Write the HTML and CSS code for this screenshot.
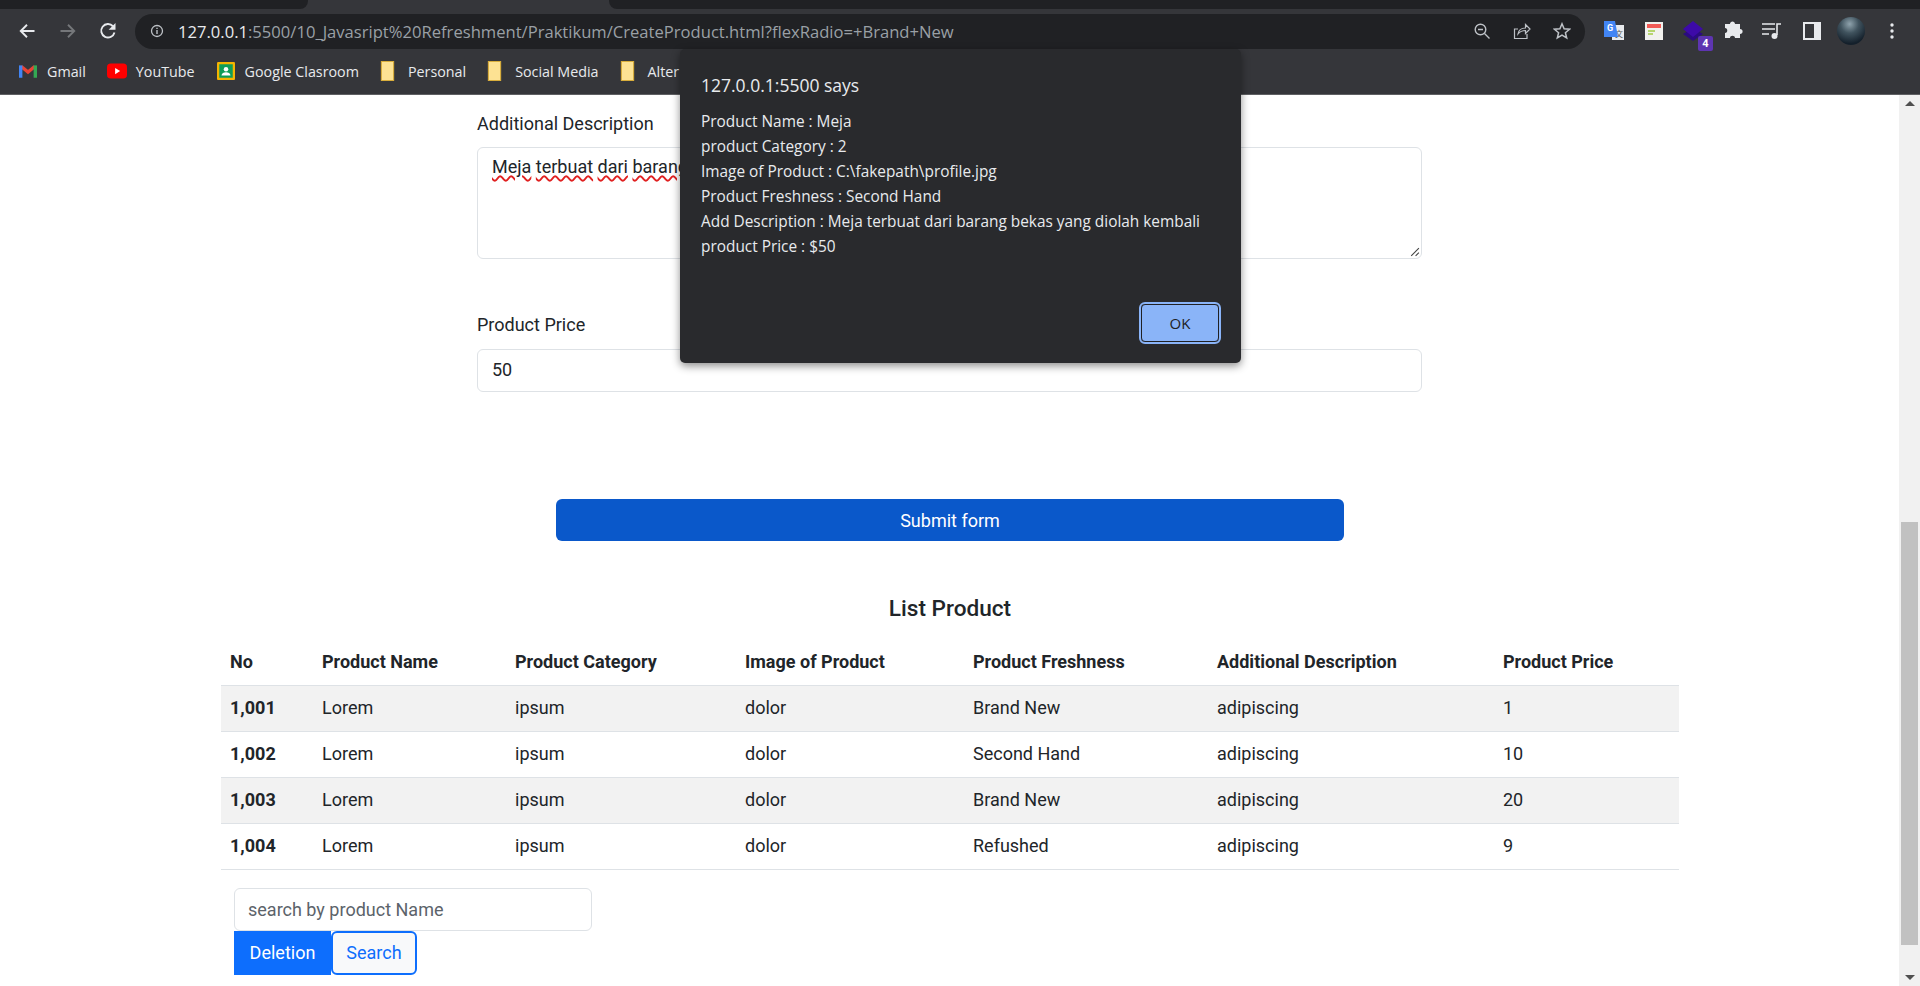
FILE: index.html
```html
<!DOCTYPE html>
<html lang="en">
<head>
  <meta charset="UTF-8">
  <title>Create Product</title>
  <link rel="stylesheet" href="styles.css">
</head>
<body>
  <div class="browser-top">
    <div class="tab-strip">
      <div class="tab-piece tab-left"></div>
      <div class="tab-piece tab-right"></div>
    </div>
    <div class="toolbar">
      <div class="nav-icons">
        <svg class="nav-icon" viewBox="0 0 16 16"><path d="M14 8H3M8 3 3 8l5 5" fill="none" stroke="#e8eaed" stroke-width="1.5"/></svg>
        <svg class="nav-icon" viewBox="0 0 16 16"><path d="M2 8h11M8 3l5 5-5 5" fill="none" stroke="#75777a" stroke-width="1.5"/></svg>
        <svg class="nav-icon" viewBox="0 0 16 16"><path d="M13.2 9.200A5.400 5.400 0 1 1 12 4.200" fill="none" stroke="#e8eaed" stroke-width="1.5"/><path d="M14 1.500V7H8.500z" fill="#e8eaed"/></svg>
      </div>
      <div class="omnibox">
        <svg class="info-icon" viewBox="0 0 14 14"><circle cx="7" cy="7" r="5.500" fill="none" stroke="#bdc1c6" stroke-width="1.300"/><path d="M7 6v4M7 3.800v1.300" stroke="#bdc1c6" stroke-width="1.400"/></svg>
        <div class="url"><span class="url-host">127.0.0.1</span>:5500/10_Javasript%20Refreshment/Praktikum/CreateProduct.html?flexRadio=+Brand+New</div>
        <div class="omni-actions">
          <svg class="omni-icon" viewBox="0 0 18 18"><circle cx="7.500" cy="7.500" r="5.300" fill="none" stroke="#bdc1c6" stroke-width="1.400"/><path d="M5 7.500h5M11.500 11.500l5 5" stroke="#bdc1c6" stroke-width="1.400"/></svg>
          <svg class="omni-icon" viewBox="0 0 18 18"><path d="M5 7H1.500v9.500H14V12" fill="none" stroke="#bdc1c6" stroke-width="1.200"/><path d="M5 12c.6-4 3.500-6 7.500-6V2.500L17 7l-4.500 4.500V8.500C9 8.500 7 9.500 5 12z" fill="none" stroke="#bdc1c6" stroke-width="1.200"/></svg>
          <svg class="omni-icon" viewBox="0 0 18 18"><path d="M9 1.800 11.100 6.800 16.500 7.200 12.400 10.700 13.700 16 9 13.200 4.300 16 5.600 10.700 1.500 7.200 6.900 6.800z" fill="none" stroke="#bdc1c6" stroke-width="1.500"/></svg>
        </div>
      </div>
      <div class="ext-icons">
        <svg class="ext-icon" viewBox="0 0 22 22"><rect x="9" y="5" width="12" height="15" fill="#e8eaed"/><text x="12" y="17" class="ext-glyph-dark">文</text><path d="M1 1h11l3 16H1z" fill="#4285f4"/><text x="4" y="11" class="ext-glyph">G</text></svg>
        <svg class="ext-icon" viewBox="0 0 22 22"><rect x="2" y="2" width="18" height="18" fill="#f1f1ee"/><rect x="4" y="4" width="14" height="4" fill="#f25a55"/><rect x="5" y="10" width="7" height="2" fill="#b6d56f"/><rect x="5" y="13" width="5" height="2" fill="#b6d56f"/></svg>
        <div class="ext-badged">
          <svg class="ext-icon" viewBox="0 0 22 22"><path d="M1 14 11 8l10 6-10 7z" fill="#2b0b80"/><path d="M1 9 11 1l10 8-10 8z" fill="#3d0aa8"/></svg>
          <span class="ext-badge">4</span>
        </div>
        <svg class="ext-icon" viewBox="0 0 22 22"><path d="M8 4c0-3.500 5-3.500 5 0h5v5c3.500 0 3.500 5 0 5v4h-5c0-3-5-3-5 0H3v-5c3 0 3-5 0-5V4z" fill="#e8eaed"/></svg>
        <svg class="ext-icon" viewBox="0 0 22 22"><path d="M1 4h13M1 9h13M1 14h7" stroke="#e8eaed" stroke-width="1.600"/><path d="M16 15V4h4" fill="none" stroke="#e8eaed" stroke-width="1.600"/><circle cx="13.500" cy="16" r="3" fill="#e8eaed"/></svg>
        <svg class="ext-icon" viewBox="0 0 22 22"><path fill-rule="evenodd" d="M2 2h18v18H2zM4 4v14h9V4z" fill="#e8eaed"/></svg>
        <div class="avatar"></div>
        <svg class="menu-dots" viewBox="0 0 4 18"><circle cx="2" cy="3" r="1.700" fill="#e8eaed"/><circle cx="2" cy="9" r="1.700" fill="#e8eaed"/><circle cx="2" cy="15" r="1.700" fill="#e8eaed"/></svg>
      </div>
    </div>
    <div class="bookmarks">
      <div class="bookmark">
        <svg class="bm-icon bm-gmail" viewBox="0 0 16 14"><path d="M2 3l6 5 6-5" fill="none" stroke="#ea4335" stroke-width="3"/><rect x="0" y="2" width="3" height="11" fill="#4285f4"/><rect x="13" y="2" width="3" height="11" fill="#34a853"/></svg>
        Gmail
      </div>
      <div class="bookmark">
        <svg class="bm-icon" viewBox="0 0 16 14"><rect x="0" y="1" width="16" height="12" rx="3" fill="#f00"/><path d="M6.500 4.500v5L10.500 7z" fill="#fff"/></svg>
        YouTube
      </div>
      <div class="bookmark">
        <svg class="bm-icon" viewBox="0 0 16 16"><rect x="0" y="0" width="16" height="16" rx="1" fill="#f4b400"/><rect x="2" y="2" width="12" height="12" fill="#0f9d58"/><circle cx="8" cy="6.500" r="2" fill="#fff"/><path d="M4 12c0-4 8-4 8 0z" fill="#fff"/></svg>
        Google Clasroom
      </div>
      <div class="bookmark">
        <svg class="bm-folder" viewBox="0 0 12 18"><path d="M.5.500h11v17H.5z" fill="#fde293" stroke="#d9ae3c"/></svg>
        Personal
      </div>
      <div class="bookmark">
        <svg class="bm-folder" viewBox="0 0 12 18"><path d="M.5.500h11v17H.5z" fill="#fde293" stroke="#d9ae3c"/></svg>
        Social Media
      </div>
      <div class="bookmark">
        <svg class="bm-folder" viewBox="0 0 12 18"><path d="M.5.500h11v17H.5z" fill="#fde293" stroke="#d9ae3c"/></svg>
        Alter
      </div>
    </div>
  </div>

  <div class="viewport">
    <main class="page">
      <section class="form-area">
        <label class="field-label">Additional Description</label>
        <div class="fake-textarea">
          <span class="misspelled">Meja</span> <span class="misspelled">terbuat</span> <span class="misspelled">dari</span> <span class="misspelled">barang</span>
          <svg class="resize-grip" viewBox="0 0 10 10"><path d="M9 2 2 9M9 6 6 9" stroke="#444" stroke-width="1"/></svg>
        </div>
        <label class="field-label price-label">Product Price</label>
        <div class="fake-input">50</div>
      </section>

      <button class="submit-btn">Submit form</button>

      <h4 class="list-title">List Product</h4>

      <table class="product-table">
        <colgroup>
          <col class="col-no"><col class="col-name"><col class="col-cat"><col class="col-img"><col class="col-fresh"><col class="col-desc"><col class="col-price">
        </colgroup>
        <thead>
          <tr><th>No</th><th>Product Name</th><th>Product Category</th><th>Image of Product</th><th>Product Freshness</th><th>Additional Description</th><th>Product Price</th></tr>
        </thead>
        <tbody>
          <tr><th>1,001</th><td>Lorem</td><td>ipsum</td><td>dolor</td><td>Brand New</td><td>adipiscing</td><td>1</td></tr>
          <tr><th>1,002</th><td>Lorem</td><td>ipsum</td><td>dolor</td><td>Second Hand</td><td>adipiscing</td><td>10</td></tr>
          <tr><th>1,003</th><td>Lorem</td><td>ipsum</td><td>dolor</td><td>Brand New</td><td>adipiscing</td><td>20</td></tr>
          <tr><th>1,004</th><td>Lorem</td><td>ipsum</td><td>dolor</td><td>Refushed</td><td>adipiscing</td><td>9</td></tr>
        </tbody>
      </table>

      <div class="search-box">
        <input class="search-input" type="text" placeholder="search by product Name">
        <div class="search-actions">
          <button class="btn-delete">Deletion</button>
          <button class="btn-search">Search</button>
        </div>
      </div>
    </main>

    <div class="scrollbar">
      <div class="scroll-arrow arrow-up"></div>
      <div class="scroll-track"><div class="scroll-thumb"></div></div>
      <div class="scroll-arrow arrow-down"></div>
    </div>
  </div>

  <div class="alert-dialog">
    <div class="alert-title">127.0.0.1:5500 says</div>
    <div class="alert-body">
      <div>Product Name : Meja</div>
      <div>product Category : 2</div>
      <div>Image of Product : C:\fakepath\profile.jpg</div>
      <div>Product Freshness : Second Hand</div>
      <div>Add Description : Meja terbuat dari barang bekas yang diolah kembali</div>
      <div>product Price : $50</div>
    </div>
    <div class="alert-actions"><button class="alert-ok">OK</button></div>
  </div>
</body>
</html>
```

FILE: styles.css
```css
html, body {
  height: 100%;
}
body {
  margin: 0;
  display: flex;
  flex-direction: column;
  overflow: hidden;
  font-family: Roboto, sans-serif;
  font-size: 18px;
  color: #212529;
  background: #fff;
}
.browser-top {
  flex: none;
  height: 95px;
  box-sizing: border-box;
  background: #35363a;
  border-bottom: 1px solid #5f6063;
  font-family: "Open Sans", sans-serif;
}
.tab-strip {
  height: 9px;
  display: flex;
  justify-content: space-between;
}
.tab-piece {
  background: #202124;
}
.tab-left {
  width: 308px;
  border-radius: 0 0 8px 0;
}
.tab-right {
  width: 1311px;
  border-radius: 0 0 0 8px;
}
.toolbar {
  height: 43px;
  display: flex;
  align-items: center;
}
.nav-icons {
  width: 135px;
  flex: none;
  display: flex;
  gap: 20.500px;
  padding-left: 17px;
  box-sizing: border-box;
}
.nav-icon {
  width: 20px;
  height: 20px;
}
.omnibox {
  width: 1450px;
  flex: none;
  height: 35px;
  margin-top: 1px;
  display: flex;
  align-items: center;
  background: #202124;
  border-radius: 18px;
  box-sizing: border-box;
  padding-left: 15px;
}
.info-icon {
  width: 14px;
  height: 14px;
  margin-right: 14px;
}
.url {
  flex: 1;
  font-size: 16.600px;
  color: #9aa0a6;
  white-space: nowrap;
}
.url-host {
  color: #e8eaed;
}
.omni-actions {
  display: flex;
  gap: 22px;
  padding-right: 14px;
}
.omni-icon {
  width: 18px;
  height: 18px;
}
.ext-icons {
  flex: 1;
  display: flex;
  align-items: center;
  gap: 17.500px;
  padding-left: 18px;
}
.ext-icon {
  width: 22px;
  height: 22px;
  display: block;
}
.ext-glyph {
  font-family: Roboto, sans-serif;
  font-size: 9px;
  font-weight: 700;
  fill: #fff;
}
.ext-glyph-dark {
  font-family: "Noto Sans CJK SC", sans-serif;
  font-size: 8px;
  fill: #555;
}
.ext-badged {
  position: relative;
}
.ext-badge {
  position: absolute;
  right: -9px;
  bottom: -9px;
  width: 15px;
  height: 15px;
  border-radius: 2px;
  background: #5e35b1;
  color: #fff;
  font-family: Roboto, sans-serif;
  font-size: 11px;
  font-weight: 700;
  line-height: 15px;
  text-align: center;
}
.avatar {
  width: 28px;
  height: 28px;
  margin-left: -3px;
  border-radius: 50%;
  background: radial-gradient(circle at 45% 25%, #8fa3ad 0, #40535e 35%, #14202b 75%);
}
.menu-dots {
  width: 4px;
  height: 18px;
  margin-left: 7px;
}
.bookmarks {
  height: 38px;
  display: flex;
  align-items: center;
  padding-left: 19px;
  gap: 21px;
  font-size: 14.300px;
  color: #e8eaed;
  white-space: nowrap;
  overflow: hidden;
}
.bookmark {
  display: flex;
  align-items: center;
  gap: 9px;
}
.bm-icon {
  width: 20px;
  height: 18px;
}
.bm-gmail {
  width: 18px;
  margin-right: 1px;
}
.bm-folder {
  width: 15px;
  height: 20px;
  margin-right: 4px;
}

/* page under the chrome */
.viewport {
  flex: 1;
  display: flex;
  min-height: 0;
}
.page {
  flex: 1;
  min-width: 0;
  display: flex;
  flex-direction: column;
  box-sizing: border-box;
  padding-top: 17px;
}
.form-area {
  width: 945px;
  margin-left: 477px;
}
.field-label {
  display: block;
  line-height: 24px;
  margin-bottom: 11px;
  color: #212529;
}
.price-label {
  margin-top: 54px;
  margin-bottom: 12px;
}
.fake-textarea {
  position: relative;
  height: 112px;
  box-sizing: border-box;
  padding: 7px 14px;
  border: 1px solid #dee2e6;
  border-radius: 6px;
  line-height: 24px;
}
.misspelled {
  text-decoration: underline wavy #e02020 1.5px;
  text-underline-offset: 2px;
}
.resize-grip {
  position: absolute;
  right: 1px;
  bottom: 1px;
  width: 11px;
  height: 11px;
}
.fake-input {
  height: 43px;
  box-sizing: border-box;
  padding: 7px 14px;
  border: 1px solid #dee2e6;
  border-radius: 6px;
  line-height: 25px;
}
.submit-btn {
  width: 788px;
  height: 42px;
  margin: 107px 0 0 556px;
  border: 0;
  border-radius: 6px;
  background: #0a58ca;
  color: #fff;
  font: 18px Roboto, sans-serif;
}
.list-title {
  width: 1900px;
  margin: 53px 0 0;
  font-size: 22.600px;
  font-weight: 500;
  line-height: 30px;
  text-align: center;
}
.product-table {
  width: 1458px;
  margin: 15px 0 0 221px;
  border-collapse: collapse;
  table-layout: fixed;
}
.col-no { width: 92px; }
.col-name { width: 193px; }
.col-cat { width: 230px; }
.col-img { width: 228px; }
.col-fresh { width: 244px; }
.col-desc { width: 286px; }
.product-table th,
.product-table td {
  height: 46px;
  box-sizing: border-box;
  padding: 7px 8px 8px 9px;
  text-align: left;
  border-bottom: 1px solid #dee2e6;
  font-size: 18px;
  white-space: nowrap;
}
.product-table th {
  font-weight: 700;
}
.product-table tbody tr:nth-child(odd) {
  background: #f2f2f2;
}
.search-box {
  width: 358px;
  margin: 18px 0 0 234px;
}
.search-input {
  display: block;
  width: 100%;
  height: 43px;
  box-sizing: border-box;
  padding: 8px 13px;
  border: 1px solid #dee2e6;
  border-radius: 6px;
  font: 18px Roboto, sans-serif;
  color: #212529;
}
.search-input::placeholder {
  color: #5c636a;
  opacity: 1;
}
.search-actions {
  display: flex;
}
.btn-delete {
  width: 97px;
  height: 44px;
  border: 0;
  background: #0d6efd;
  color: #fff;
  font: 18px Roboto, sans-serif;
}
.btn-search {
  width: 86px;
  height: 44px;
  border: 2px solid #0d6efd;
  border-radius: 6px;
  background: #f8f9fa;
  color: #0d6efd;
  font: 18px Roboto, sans-serif;
}
.scrollbar {
  width: 21px;
  flex: none;
  display: flex;
  flex-direction: column;
  background: #f1f1f1;
}
.scroll-arrow {
  height: 17px;
  flex: none;
  display: flex;
  align-items: center;
  justify-content: center;
}
.scroll-arrow::before {
  content: "";
  border-left: 5px solid transparent;
  border-right: 5px solid transparent;
}
.arrow-up::before {
  border-bottom: 5px solid #505050;
}
.arrow-down::before {
  border-top: 5px solid #505050;
}
.scroll-track {
  flex: 1;
  display: flex;
  flex-direction: column;
  justify-content: flex-end;
  padding-bottom: 24px;
}
.scroll-thumb {
  width: 17px;
  height: 423px;
  margin-left: 2px;
  background: #c1c1c1;
}

/* js alert on top of everything */
.alert-dialog {
  position: absolute;
  left: 680px;
  top: 49px;
  width: 561px;
  height: 314px;
  box-sizing: border-box;
  padding: 24px 20px 19px 21px;
  background: #292a2d;
  border-radius: 5px;
  box-shadow: 0 3px 8px rgba(0, 0, 0, .45);
  color: #e8eaed;
  font-family: "Open Sans", sans-serif;
  display: flex;
  flex-direction: column;
}
.alert-title {
  font-size: 17.500px;
  line-height: 24px;
}
.alert-body {
  margin-top: 12px;
  font-size: 15.400px;
  line-height: 25px;
  flex: 1;
}
.alert-actions {
  display: flex;
  justify-content: flex-end;
}
.alert-ok {
  width: 78px;
  height: 38px;
  margin: 2px;
  border: 1px solid #202124;
  border-radius: 4px;
  outline: 2px solid #8ab4f8;
  outline-offset: 0;
  background: #8ab4f8;
  color: #202124;
  font: 15px "Open Sans", sans-serif;
}
```
